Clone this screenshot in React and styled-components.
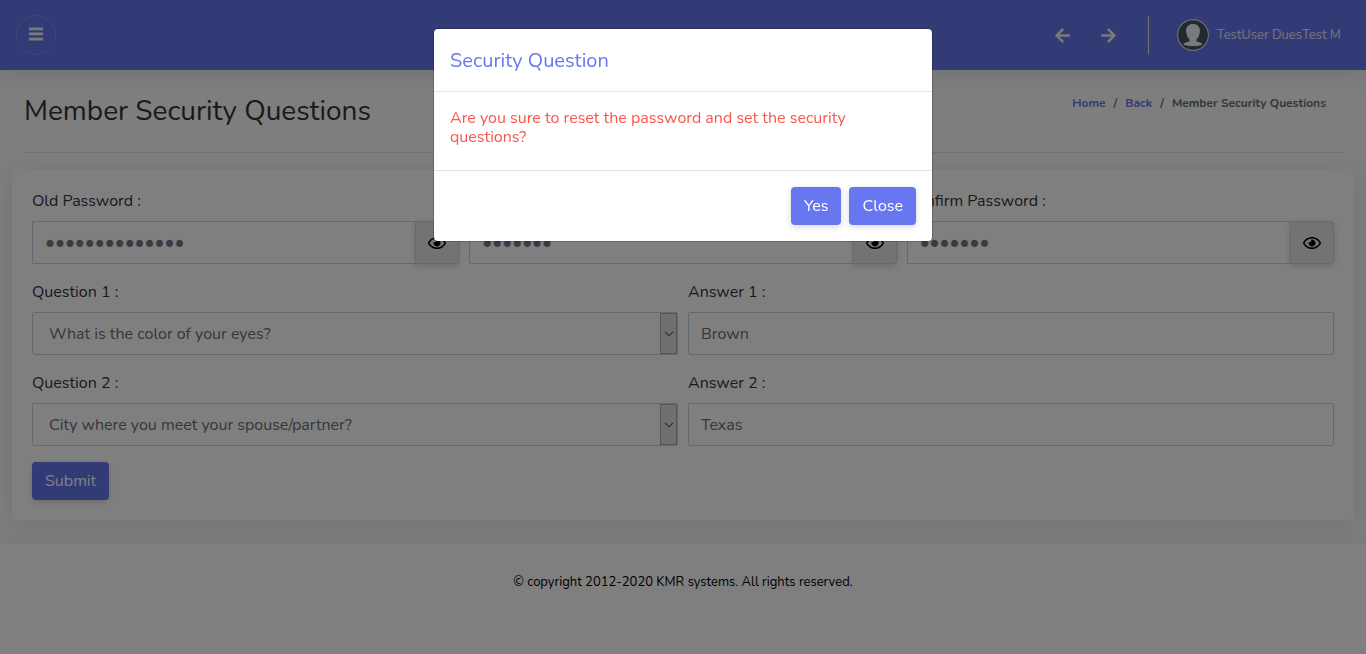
import React from "react";
import styled, { createGlobalStyle } from "styled-components";
import { FaArrowLeft, FaArrowRight, FaRegEye } from "react-icons/fa";

const primary = "#6777ef";
const line = "#cfd0de";

const GlobalStyle = createGlobalStyle`
  *, *::before, *::after { box-sizing: border-box; }
  body {
    margin: 0;
    background: #fafdfb;
    color: #34353a;
    font-family: Nunito, Lato, "Open Sans", sans-serif;
    font-size: 16px;
    line-height: 24px;
  }
  button, input, select { font: inherit; }
`;

const Page = styled.div`
  display: flex;
  flex-direction: column;
  min-height: 100vh;
`;

const Navbar = styled.header`
  display: flex;
  align-items: center;
  justify-content: space-between;
  height: 70px;
  padding: 0 25px 0 16px;
  background: ${primary};
  color: #fff;
  box-shadow: 0 4px 25px rgba(0, 0, 0, 0.1);
`;

const MenuButton = styled.button`
  display: flex;
  align-items: center;
  justify-content: center;
  width: 40px;
  height: 40px;
  padding: 0 0 2px;
  border: 1px solid rgba(255, 255, 255, 0.15);
  border-radius: 50%;
  background: none;
  color: #f2f2f2;
`;

const NavTools = styled.div`
  display: flex;
  align-items: center;
`;

const ArrowButton = styled.button`
  display: flex;
  align-items: center;
  justify-content: center;
  width: 46px;
  height: 38px;
  padding: 0;
  border: 0;
  background: none;
  color: #f2f2f2;
  font-size: 17px;
`;

const UserLink = styled.a`
  display: flex;
  align-items: center;
  gap: 8px;
  height: 38px;
  margin-left: 16px;
  padding-left: 28px;
  border-left: 1px solid #e8e8e8;
  color: #e8e8e8;
  font-size: 13px;
  text-decoration: none;
`;

const Main = styled.main`
  flex: none;
  padding: 0 12px 24px;
`;

const TitleBar = styled.div`
  display: flex;
  align-items: flex-start;
  justify-content: space-between;
  height: 83px;
  margin: 0 12px 16px;
  padding: 23px 16px 0 0;
  border-bottom: 1px solid #dfe3e3;
`;

const PageTitle = styled.h1`
  margin: 0;
  font-size: 28px;
  line-height: 36px;
  font-weight: 400;
`;

const Breadcrumb = styled.ol`
  display: flex;
  gap: 8px;
  margin: 0;
  padding: 0;
  list-style: none;
  font-size: 12px;
  line-height: 20px;
  font-weight: 700;
  color: #6c6d70;
`;

const Crumb = styled.li`
  display: flex;
  gap: 8px;

  & + &::before {
    content: "/";
  }
`;

const CrumbLink = styled.a`
  color: ${primary};
  text-decoration: none;
`;

const Card = styled.form`
  display: flex;
  flex-direction: column;
  gap: 16px;
  padding: 20px;
  border-radius: 5px;
  background: #fff;
  box-shadow: 0 4px 25px rgba(0, 0, 0, 0.1);
`;

const FieldRow = styled.div`
  display: flex;
  gap: 10px;
`;

const Field = styled.div`
  flex: 1 1 0;
  min-width: 0;
`;

const Label = styled.label`
  display: block;
  margin-bottom: 8px;
`;

const TextInput = styled.input`
  flex: 1 1 0;
  display: block;
  width: 100%;
  min-width: 0;
  height: 43px;
  padding: 0 12px;
  border: 1px solid ${line};
  border-radius: 2px;
  background: #fff;
  color: #6c6d7a;
`;

const InputGroup = styled.div`
  display: flex;

  ${TextInput} {
    border-right: 0;
    border-radius: 2px 0 0 2px;
    color: #74747f;
    font-size: 19px;
  }
`;

const EyeButton = styled.button`
  display: flex;
  align-items: center;
  justify-content: center;
  width: 44px;
  padding: 0;
  border: 1px solid #ced4da;
  border-radius: 0 4px 4px 0;
  background: #e3e6ea;
  color: #000;
  font-size: 18px;
  box-shadow: 0 2px 6px rgba(0, 0, 0, 0.16);
`;

const SelectBox = styled.div`
  display: flex;
  height: 43px;
  border: 1px solid ${line};
  border-radius: 2px;
`;

const Select = styled.select`
  flex: 1 1 0;
  min-width: 0;
  padding: 0 16px;
  border: 0;
  background: #fff;
  color: #6c6d7a;
  appearance: none;
`;

const SelectHandle = styled.span`
  display: flex;
  align-items: center;
  justify-content: center;
  width: 17px;
  border: 1px solid #adadad;
  background: #e1e1e1;
  color: #555;
  pointer-events: none;
`;

const Button = styled.button`
  align-self: flex-start;
  height: 38px;
  padding: 0 13px;
  border: 0;
  border-radius: 4px;
  background: ${primary};
  color: #fff;
  box-shadow: 0 2px 6px rgba(0, 0, 0, 0.16);
`;

const Footer = styled.footer`
  flex: 1 0 auto;
  padding: 26px 16px;
  background: #fff;
  box-shadow: 0 4px 25px rgba(0, 0, 0, 0.1);
  color: #000;
  font-size: 13px;
  text-align: center;
`;

const Backdrop = styled.div`
  position: fixed;
  inset: 0;
  display: flex;
  align-items: flex-start;
  justify-content: center;
  padding: 28px 16px;
  background: rgba(0, 0, 0, 0.5);
`;

const Dialog = styled.section`
  width: 100%;
  max-width: 500px;
  border: 1px solid rgba(0, 0, 0, 0.2);
  border-radius: 5px;
  background: #fff;
  background-clip: padding-box;
`;

const DialogTitle = styled.h2`
  margin: 0;
  padding: 17px 16px 15px;
  border-bottom: 1px solid #e3e3ee;
  color: ${primary};
  font-size: 20px;
  line-height: 30px;
  font-weight: 400;
`;

const DialogText = styled.p`
  margin: 0;
  padding: 17px 16px 23px;
  color: #fc544b;
  line-height: 19px;
`;

const DialogActions = styled.div`
  display: flex;
  justify-content: flex-end;
  gap: 8px;
  padding: 16px;
  border-top: 1px solid #e3e3ee;
`;

function MenuIcon() {
  return (
    <svg width="14" height="14" viewBox="0 0 14 14" fill="currentColor" aria-hidden="true">
      <path d="M0 .5h14v2.7H0zM0 5.6h14v2.7H0zM0 10.7h14v2.7H0z" />
    </svg>
  );
}

function Avatar() {
  return (
    <svg width="32" height="32" viewBox="0 0 32 32" aria-hidden="true">
      <circle cx="16" cy="16" r="15.4" fill="#465264" stroke="#dfe2ea" strokeWidth="1.1" />
      <path
        fill="#f4f4f4"
        d="M16 5c4.300 0 7 2.700 7 7 0 1-.2 1.700-.5 2.200-.3 2.800-1.500 4.700-3 6v1.700c.5 1.300 5.500 1 6 3.600C23.300 26.700 19.500 27 16 27s-7.300-.3-9.500-1.500c.5-2.600 5.500-2.300 6-3.600v-1.700c-1.500-1.300-2.700-3.200-3-6C9.200 13.700 9 13 9 12c0-4.300 2.700-7 7-7z"
      />
    </svg>
  );
}

function Chevron() {
  return (
    <svg width="10" height="6" viewBox="0 0 10 6" fill="none" stroke="currentColor" strokeWidth="1.1" aria-hidden="true">
      <path d="M1 .8 5 4.800 9 .8" />
    </svg>
  );
}

function PasswordField({ id, label, value }) {
  return (
    <Field>
      <Label htmlFor={id}>{label}</Label>
      <InputGroup>
        <TextInput id={id} type="password" defaultValue={value} autoComplete="off" />
        <EyeButton type="button" aria-label="Show password">
          <FaRegEye />
        </EyeButton>
      </InputGroup>
    </Field>
  );
}

function QuestionRow({ number, question, answer }) {
  return (
    <FieldRow>
      <Field>
        <Label htmlFor={`question-${number}`}>Question {number} :</Label>
        <SelectBox>
          <Select id={`question-${number}`}>
            <option>{question}</option>
          </Select>
          <SelectHandle>
            <Chevron />
          </SelectHandle>
        </SelectBox>
      </Field>
      <Field>
        <Label htmlFor={`answer-${number}`}>Answer {number} :</Label>
        <TextInput id={`answer-${number}`} type="text" defaultValue={answer} />
      </Field>
    </FieldRow>
  );
}

export default function App() {
  return (
    <>
      <GlobalStyle />
      <Page>
        <Navbar>
          <MenuButton aria-label="Menu">
            <MenuIcon />
          </MenuButton>
          <NavTools>
            <ArrowButton aria-label="Previous">
              <FaArrowLeft />
            </ArrowButton>
            <ArrowButton aria-label="Next">
              <FaArrowRight />
            </ArrowButton>
            <UserLink href="#profile">
              <Avatar />
              TestUser DuesTest M
            </UserLink>
          </NavTools>
        </Navbar>

        <Main>
          <TitleBar>
            <PageTitle>Member Security Questions</PageTitle>
            <Breadcrumb>
              <Crumb>
                <CrumbLink href="#home">Home</CrumbLink>
              </Crumb>
              <Crumb>
                <CrumbLink href="#back">Back</CrumbLink>
              </Crumb>
              <Crumb>Member Security Questions</Crumb>
            </Breadcrumb>
          </TitleBar>

          <Card>
            <FieldRow>
              <PasswordField id="old-password" label="Old Password :" value="abcdefghijklmn" />
              <PasswordField id="new-password" label="New Password :" value="abcdefg" />
              <PasswordField id="confirm-password" label="Confirm Password :" value="abcdefg" />
            </FieldRow>
            <QuestionRow number={1} question="What is the color of your eyes?" answer="Brown" />
            <QuestionRow number={2} question="City where you meet your spouse/partner?" answer="Texas" />
            <Button type="button">Submit</Button>
          </Card>
        </Main>

        <Footer>© copyright 2012-2020 KMR systems. All rights reserved.</Footer>
      </Page>

      <Backdrop>
        <Dialog role="dialog" aria-modal="true" aria-labelledby="dialog-title">
          <DialogTitle id="dialog-title">Security Question</DialogTitle>
          <DialogText>Are you sure to reset the password and set the security questions?</DialogText>
          <DialogActions>
            <Button type="button">Yes</Button>
            <Button type="button">Close</Button>
          </DialogActions>
        </Dialog>
      </Backdrop>
    </>
  );
}
